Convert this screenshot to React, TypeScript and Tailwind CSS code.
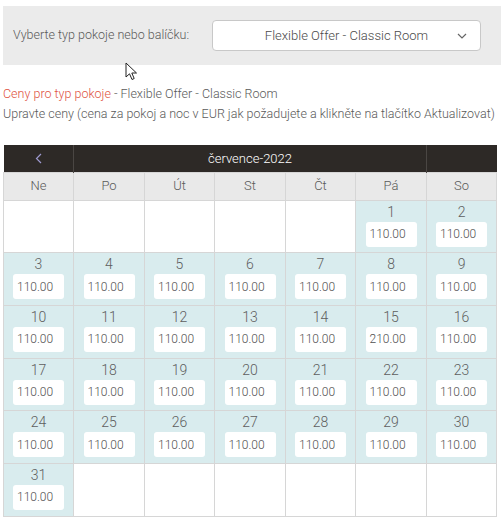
import React from "react";

const days = ["Ne", "Po", "Út", "St", "Čt", "Pá", "So"];

function buildWeeks() {
  const cells: (number | null)[] = [null, null, null, null, null];
  for (let d = 1; d <= 31; d++) cells.push(d);
  while (cells.length % 7 !== 0) cells.push(null);
  const weeks: (number | null)[][] = [];
  for (let i = 0; i < cells.length; i += 7) weeks.push(cells.slice(i, i + 7));
  return weeks;
}

export default function App() {
  const weeks = buildWeeks();
  return (
    <div className="relative w-[501px] h-[527px] bg-white text-[#5a5a5a] font-['Roboto',sans-serif] font-light">
      <div className="pt-[6px] pl-[3px]">
        <div className="flex items-center h-[59px] bg-[#ebebeb] pl-[10px] pr-[20px]">
          <span className="text-[12.5px] text-[#5a5a5a] whitespace-nowrap">Vyberte typ pokoje nebo balíčku:</span>
          <div className="ml-auto relative flex items-center justify-center w-[269px] h-[31px] bg-white border border-[#c8c8c8] rounded-[4px]">
            <span className="text-[13px] text-[#4a4a4a]">Flexible Offer - Classic Room</span>
            <svg className="absolute right-[13px] top-[12px]" width="10" height="6" viewBox="0 0 10 6">
              <path d="M1 1 L5 5 L9 1" stroke="#666" strokeWidth="1.2" fill="none" />
            </svg>
          </div>
        </div>
        <div className="mt-[19px] text-[12.5px] leading-[20px] whitespace-nowrap">
          <div>
            <span className="text-[#e0533f]">Ceny pro typ pokoje</span>
            <span className="text-[#5a5a5a]"> - Flexible Offer - Classic Room</span>
          </div>
          <div className="text-[#5a5a5a]">Upravte ceny (cena za pokoj a noc v EUR jak požadujete a klikněte na tlačítko Aktualizovat)</div>
        </div>
        <table className="mt-[21px] w-[493px] table-fixed border-collapse">
          <colgroup>
            <col className="w-[70px]" />
            <col className="w-[71px]" />
            <col className="w-[70px]" />
            <col className="w-[71px]" />
            <col className="w-[70px]" />
            <col className="w-[71px]" />
            <col className="w-[70px]" />
          </colgroup>
          <thead>
            <tr className="h-[27px] bg-[#2d2926] text-white">
              <th className="border-r border-[#4a4643] font-normal p-0">
                <svg className="mx-auto" width="7" height="11" viewBox="0 0 7 11">
                  <path d="M6 1 L1.5 5.5 L6 10" stroke="#9e9ad0" strokeWidth="1.2" fill="none" />
                </svg>
              </th>
              <th colSpan={5} className="border-r border-[#4a4643] text-[13px] font-light p-0">července-2022</th>
              <th className="p-0"></th>
            </tr>
            <tr className="h-[28px] bg-[#e9e9e9]">
              {days.map((d) => (
                <th key={d} className="border border-[#d6d6d6] text-[13px] font-light text-[#5a5a5a] p-0">{d}</th>
              ))}
            </tr>
          </thead>
          <tbody>
            {weeks.map((w, wi) => (
              <tr key={wi} className="h-[52.7px]">
                {w.map((d, di) => (
                  <td key={di} className={`border border-[#d6d6d6] p-0 align-top ${d ? "bg-[#d9ecee]" : "bg-white"}`}>
                    {d && (
                      <div className="flex flex-col items-center">
                        <div className="text-[14px] leading-[16px] mt-[3px] text-[#5e5e5e]">{d}</div>
                        <div className="mt-[2px] w-[51px] h-[25px] bg-white rounded-[3px] flex items-center pl-[4px] text-[12px] text-[#505050]">
                          {d === 15 ? "210.00" : "110.00"}
                        </div>
                      </div>
                    )}
                  </td>
                ))}
              </tr>
            ))}
          </tbody>
        </table>
      </div>
      <svg className="absolute left-[125px] top-[62px]" width="14" height="20" viewBox="0 0 14 20">
        <path d="M1 1 L1 15 L4.5 11.8 L7 17.5 L9.2 16.5 L6.8 11 L11.5 11 Z" fill="white" stroke="#222" strokeWidth="1" strokeLinejoin="round" />
      </svg>
    </div>
  );
}
